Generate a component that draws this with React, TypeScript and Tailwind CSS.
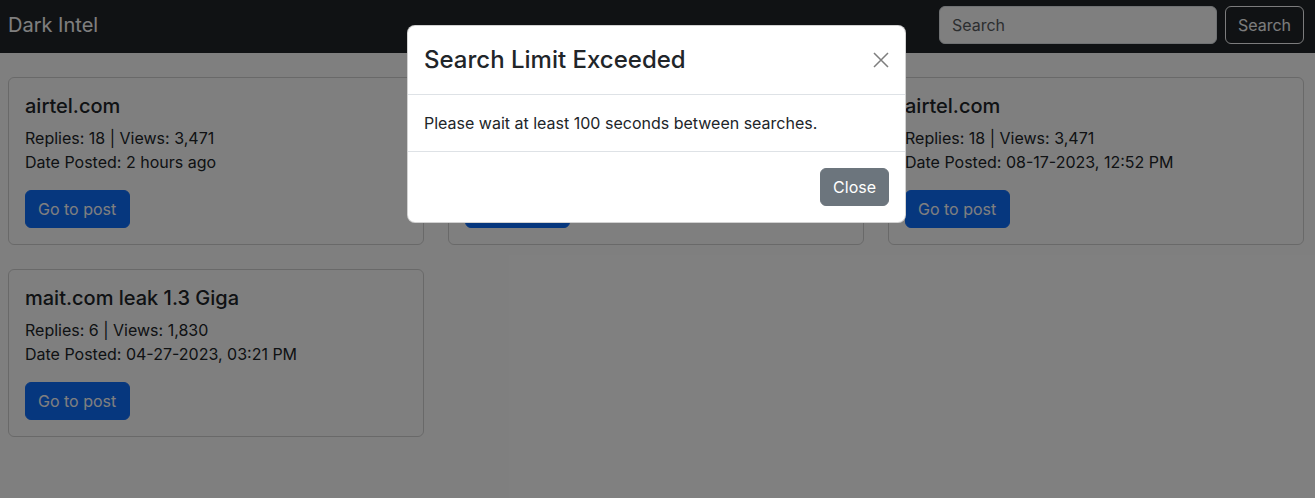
import React from "react";

type Post = { title: string; replies: string; views: string; date: string };

const posts: Post[] = [
  { title: "airtel.com", replies: "18", views: "3,471", date: "2 hours ago" },
  { title: "airtel.com", replies: "18", views: "3,471", date: "2 hours ago" },
  { title: "airtel.com", replies: "18", views: "3,471", date: "08-17-2023, 12:52 PM" },
  { title: "mait.com leak 1.3 Giga", replies: "6", views: "1,830", date: "04-27-2023, 03:21 PM" },
];

function Card({ p }: { p: Post }) {
  return (
    <div className="border border-black/[0.175] rounded-[6px] p-4 text-[#212529]">
      <h5 className="text-[20px] leading-[24px] font-medium mb-2">{p.title}</h5>
      <p className="text-[16px] leading-[24px]">
        Replies: {p.replies} | Views: {p.views}
      </p>
      <p className="text-[16px] leading-[24px] mb-4">Date Posted: {p.date}</p>
      <button className="bg-[#0d6efd] text-white text-[16px] leading-[24px] pl-3 pr-[13px] py-[6px] rounded-[6px] border border-[#0d6efd]">
        Go to post
      </button>
    </div>
  );
}

export default function App() {
  return (
    <div className="relative min-h-[498px] bg-white font-['Inter',_'Liberation_Sans',_sans-serif]">
      <nav className="bg-[#212529] h-[53px] flex items-start justify-between pl-2 pr-[11px] pt-[6px]">
        <span className="text-[20px] leading-[30px] text-white mt-[4px]">Dark Intel</span>
        <form className="flex items-center gap-2" onSubmit={(e) => e.preventDefault()}>
          <input
            placeholder="Search"
            className="w-[278px] h-[38px] rounded-[6px] border border-[#dee2e6] bg-white px-3 text-[16px] text-[#212529] placeholder:text-[#595c5f] outline-none"
          />
          <button className="h-[38px] px-3 rounded-[6px] border border-[#f8f9fa] text-[#f8f9fa] text-[16px]">
            Search
          </button>
        </form>
      </nav>
      <div className="grid grid-cols-3 gap-6 pl-2 pr-[11px] pt-6">
        {posts.map((p, i) => (
          <Card key={i} p={p} />
        ))}
      </div>

      <div className="absolute inset-0 bg-black/50" />

      <div className="absolute left-[407px] top-[25px] w-[499px] bg-white rounded-[8px] border border-black/[0.175] text-[#212529]">
        <div className="flex items-center justify-between p-4 border-b border-[#dee2e6]">
          <h4 className="text-[24px] leading-[36px] font-medium">Search Limit Exceeded</h4>
          <button className="w-4 h-4 flex items-center justify-center opacity-50">
            <svg width="16" height="16" viewBox="0 0 16 16" fill="none">
              <path d="M1 1L15 15M15 1L1 15" stroke="#000" strokeWidth="1.5" />
            </svg>
          </button>
        </div>
        <div className="p-4 text-[16px] leading-[24px]">
          Please wait at least 100 seconds between searches.
        </div>
        <div className="flex justify-end p-3 border-t border-[#dee2e6]">
          <button className="m-1 bg-[#6c757d] text-white text-[16px] leading-[24px] px-3 py-[6px] rounded-[6px] border border-[#6c757d]">
            Close
          </button>
        </div>
      </div>
    </div>
  );
}
